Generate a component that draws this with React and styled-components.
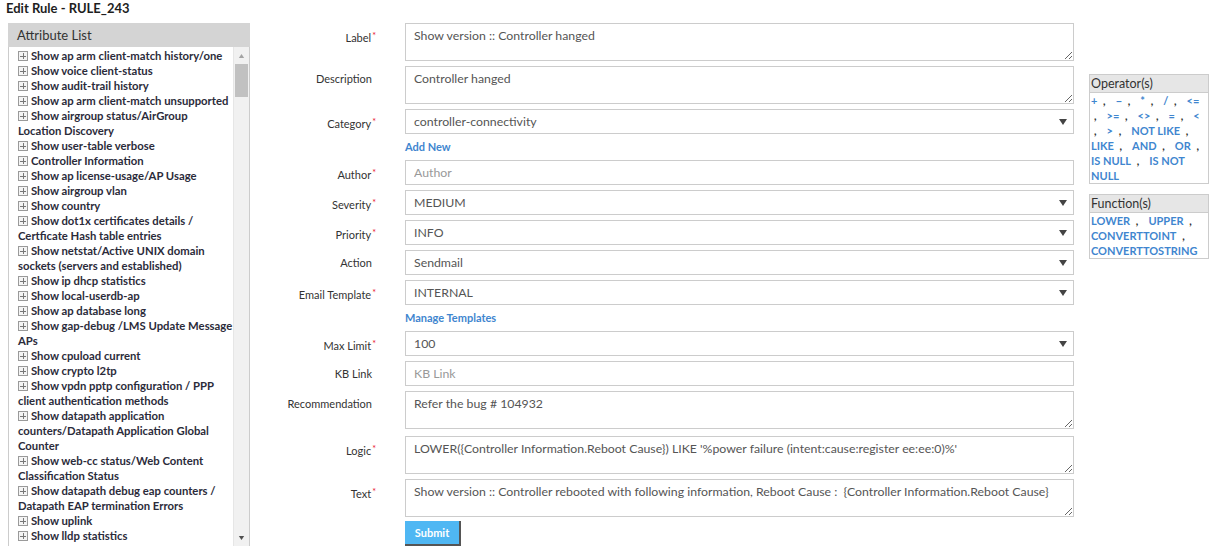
import React from "react";
import styled, { createGlobalStyle } from "styled-components";

const FONT = `Lato, "Open Sans", "Liberation Sans", sans-serif`;

const Global = createGlobalStyle`
  html, body { margin: 0; padding: 0; background: #fff; overflow: hidden; }
  body { font-family: ${FONT}; color: #333; }
  * { box-sizing: border-box; }
`;

const Page = styled.div`
  padding: 0 0 0 8px;
  width: 1212px;
  height: 546px;
  overflow: hidden;
`;

const Title = styled.h1`
  margin: 0 0 0 -2px;
  height: 23px;
  font-size: 13px;
  line-height: 17px;
  font-weight: 700;
  color: #1e1e1e;
`;

const Layout = styled.div`
  display: flex;
  align-items: flex-start;
`;

const AttrPanel = styled.section`
  width: 242px;
  height: 524px;
  display: flex;
  flex-direction: column;
  border: 1px solid #ccc;
  border-top: none;
`;

const AttrHeader = styled.div`
  height: 24px;
  background: #d4d4d4;
  padding: 0 9px;
  font-size: 13px;
  line-height: 24px;
  color: #333;
  margin: 0 -1px;
`;

const AttrBody = styled.div`
  flex: 1;
  display: flex;
  min-height: 0;
`;

const AttrList = styled.ul`
  flex: 1;
  list-style: none;
  margin: 0;
  padding: 1px 0 0 9px;
  overflow: hidden;
`;

const AttrItem = styled.li`
  font-size: 11.3px;
  line-height: 15px;
  font-weight: 700;
  color: #2b2b3a;
  white-space: nowrap;
`;

const PlusBox = styled.span`
  display: inline-flex;
  width: 10px;
  height: 10px;
  margin-right: 3px;
  vertical-align: -1px;
  border: 1px solid #9a9a9a;
  background: #f4f4f4;
  position: relative;
  &::before, &::after {
    content: "";
    position: absolute;
    background: #777;
  }
  &::before { width: 6px; height: 1px; left: 1px; top: 3.5px; }
  &::after { width: 1px; height: 6px; left: 3.5px; top: 1px; }
`;

const ScrollBar = styled.div`
  width: 16px;
  background: #f1f1f1;
  display: flex;
  flex-direction: column;
  align-items: center;
  border-left: 1px solid #e6e6e6;
`;

const ScrollArrow = styled.div`
  height: 17px;
  width: 16px;
  display: flex;
  align-items: center;
  justify-content: center;
`;

const ScrollThumb = styled.div`
  width: 13px;
  height: 33px;
  background: #c1c1c1;
`;

const ScrollSpacer = styled.div`
  flex: 1;
`;

const Form = styled.form`
  margin-left: 8px;
  width: 816px;
  display: grid;
  grid-template-columns: 118px 669px;
  column-gap: 29px;
  row-gap: 5px;
  align-items: start;
`;

const Label = styled.label`
  font-size: 11px;
  line-height: 14px;
  padding-top: 6px;
  margin-top: ${(p) => p.$mt || 0}px;
  text-align: right;
  color: #333;
`;

const Req = styled.span`
  color: #e8102e;
  font-size: 9px;
  vertical-align: 3px;
  margin-left: 1px;
`;

const ReqSpacer = styled.span`
  display: inline-block;
  width: 4px;
`;

const TextArea = styled.textarea`
  display: block;
  width: 669px;
  height: 38px;
  margin: ${(p) => p.$mt || 0}px 0 0;
  border: 1px solid #ccc;
  padding: 4px 8px;
  font-family: ${FONT};
  font-size: 12.3px;
  line-height: 16px;
  color: #555;
  resize: vertical;
  outline: none;
`;

const Input = styled.input`
  display: block;
  width: 669px;
  height: 25px;
  border: 1px solid #ccc;
  padding: 0 8px;
  font-family: ${FONT};
  font-size: 12.3px;
  color: #555;
  outline: none;
  margin: 0;
  &::placeholder { color: #999; }
`;

const SelectBox = styled.div`
  width: 669px;
  height: 25px;
  border: 1px solid #ccc;
  display: flex;
  align-items: center;
  padding: 0 6px 0 8px;
  font-size: 12.3px;
  color: #555;
`;

const SelectValue = styled.span`
  flex: 1;
`;

const LinkRow = styled.div`
  grid-column: 2;
  height: 16px;
  font-size: 11px;
  line-height: 16px;
  font-weight: 700;
  color: #3f86cf;
`;

const SubmitButton = styled.button`
  grid-column: 2;
  width: 56px;
  height: 25px;
  margin-top: -1px;
  background: #4fb7f3;
  border: none;
  border-right: 2px solid #555;
  border-bottom: 2px solid #555;
  color: #fff;
  font-family: ${FONT};
  font-size: 11px;
  font-weight: 700;
  padding: 0;
`;

const Side = styled.aside`
  margin-left: 15px;
  margin-top: 51px;
  width: 120px;
  display: flex;
  flex-direction: column;
  gap: 10px;
`;

const RefBox = styled.div`
  border: 1px solid #ccc;
`;

const RefHeader = styled.div`
  background: #e6e6e6;
  border-bottom: 1px solid #ccc;
  font-size: 12.5px;
  line-height: 17px;
  padding: 0 1px;
  color: #333;
`;

const RefBody = styled.div`
  padding: 0 1px;
  font-size: 11px;
  line-height: 15px;
  font-weight: 700;
  white-space: nowrap;
  overflow: hidden;
`;

const RefLine = styled.div``;

const Op = styled.span`
  color: #3f86cf;
`;

const Sep = styled.span`
  color: #333;
  margin: 0 ${(p) => (p.$tail ? 0 : 10)}px 0 3px;
`;

const Arrow = ({ dir = "down", color = "#444", w = 8, h = 6 }) => (
  <svg width={w} height={h} viewBox="0 0 8 6">
    {dir === "down" ? (
      <polygon points="0,0 8,0 4,6" fill={color} />
    ) : (
      <polygon points="0,6 8,6 4,0" fill={color} />
    )}
  </svg>
);

const attrs = [
  ["Show ap arm client-match history/one"],
  ["Show voice client-status"],
  ["Show audit-trail history"],
  ["Show ap arm client-match unsupported"],
  ["Show airgroup status/AirGroup", "Location Discovery"],
  ["Show user-table verbose"],
  ["Controller Information"],
  ["Show ap license-usage/AP Usage"],
  ["Show airgroup vlan"],
  ["Show country"],
  ["Show dot1x certificates details /", "Certficate Hash table entries"],
  ["Show netstat/Active UNIX domain", "sockets (servers and established)"],
  ["Show ip dhcp statistics"],
  ["Show local-userdb-ap"],
  ["Show ap database long"],
  ["Show gap-debug /LMS Update Message", "APs"],
  ["Show cpuload current"],
  ["Show crypto l2tp"],
  ["Show vpdn pptp configuration / PPP", "client authentication methods"],
  ["Show datapath application", "counters/Datapath Application Global", "Counter"],
  ["Show web-cc status/Web Content", "Classification Status"],
  ["Show datapath debug eap counters /", "Datapath EAP termination Errors"],
  ["Show uplink"],
  ["Show lldp statistics"],
];

const operatorLines = [
  [["+", 1], ["−", 1], ["*", 1], ["/", 1], ["<=", 0]],
  [[null, 1], [">=", 1], ["<>", 1], ["=", 1], ["<", 0]],
  [[null, 1], [">", 1], ["NOT LIKE", 2]],
  [["LIKE", 1], ["AND", 1], ["OR", 2]],
  [["IS NULL", 1], ["IS NOT", 0]],
  [["NULL", 0]],
];

const functionLines = [
  [["LOWER", 1], ["UPPER", 2]],
  [["CONVERTTOINT", 2]],
  [["CONVERTTOSTRING", 0]],
];

const RefLines = ({ lines }) =>
  lines.map((line, i) => (
    <RefLine key={i}>
      {line.map(([op, sep], j) => (
        <React.Fragment key={j}>
          {op && <Op>{op}</Op>}
          {sep > 0 && <Sep $tail={sep === 2}>{op ? " ," : ","}</Sep>}
        </React.Fragment>
      ))}
    </RefLine>
  ));

const FieldLabel = ({ children, req, mt }) => (
  <Label $mt={mt}>
    {children}
    {req ? <Req>*</Req> : <ReqSpacer />}
  </Label>
);

const Select = ({ value }) => (
  <SelectBox>
    <SelectValue>{value}</SelectValue>
    <Arrow />
  </SelectBox>
);

export default function App() {
  return (
    <Page>
      <Global />
      <Title>Edit Rule - RULE_243</Title>
      <Layout>
        <AttrPanel>
          <AttrHeader>Attribute List</AttrHeader>
          <AttrBody>
            <AttrList>
              {attrs.map((lines, i) => (
                <AttrItem key={i}>
                  <PlusBox />
                  {lines.map((l, j) => (
                    <React.Fragment key={j}>
                      {j > 0 && <br />}
                      {l}
                    </React.Fragment>
                  ))}
                </AttrItem>
              ))}
            </AttrList>
            <ScrollBar>
              <ScrollArrow>
                <Arrow dir="up" color="#a3a3a3" w={7} h={4} />
              </ScrollArrow>
              <ScrollThumb />
              <ScrollSpacer />
              <ScrollArrow>
                <Arrow color="#505050" w={7} h={4} />
              </ScrollArrow>
            </ScrollBar>
          </AttrBody>
        </AttrPanel>

        <Form onSubmit={(e) => e.preventDefault()}>
          <FieldLabel req>Label</FieldLabel>
          <TextArea readOnly defaultValue="Show version :: Controller hanged" />

          <FieldLabel>Description</FieldLabel>
          <TextArea readOnly defaultValue="Controller hanged" />

          <FieldLabel req>Category</FieldLabel>
          <Select value="controller-connectivity" />
          <LinkRow>Add New</LinkRow>

          <FieldLabel req>Author</FieldLabel>
          <Input placeholder="Author" />

          <FieldLabel req>Severity</FieldLabel>
          <Select value="MEDIUM" />

          <FieldLabel req>Priority</FieldLabel>
          <Select value="INFO" />

          <FieldLabel>Action</FieldLabel>
          <Select value="Sendmail" />

          <FieldLabel req>Email Template</FieldLabel>
          <Select value="INTERNAL" />
          <LinkRow>Manage Templates</LinkRow>

          <FieldLabel req>Max Limit</FieldLabel>
          <Select value="100" />

          <FieldLabel>KB Link</FieldLabel>
          <Input placeholder="KB Link" />

          <FieldLabel>Recommendation</FieldLabel>
          <TextArea readOnly defaultValue="Refer the bug # 104932" />

          <FieldLabel req mt={2}>Logic</FieldLabel>
          <TextArea
            readOnly
            $mt={2}
            defaultValue="LOWER({Controller Information.Reboot Cause}) LIKE '%power failure (intent:cause:register ee:ee:0)%'"
          />

          <FieldLabel req>Text</FieldLabel>
          <TextArea
            readOnly
            defaultValue="Show version :: Controller rebooted with following information, Reboot Cause :  {Controller Information.Reboot Cause}"
          />

          <SubmitButton type="submit">Submit</SubmitButton>
        </Form>

        <Side>
          <RefBox>
            <RefHeader>Operator(s)</RefHeader>
            <RefBody>
              <RefLines lines={operatorLines} />
            </RefBody>
          </RefBox>
          <RefBox>
            <RefHeader>Function(s)</RefHeader>
            <RefBody>
              <RefLines lines={functionLines} />
            </RefBody>
          </RefBox>
        </Side>
      </Layout>
    </Page>
  );
}
